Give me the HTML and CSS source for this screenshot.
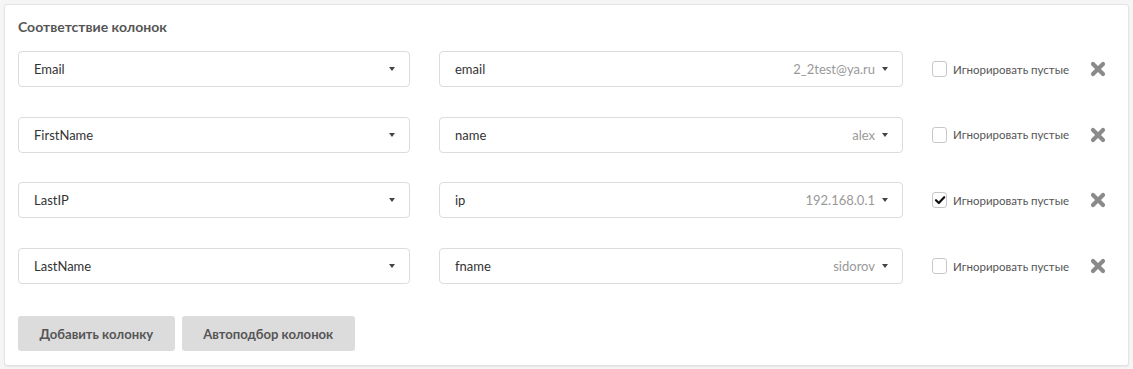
FILE: index.html
```html
<!DOCTYPE html>
<html lang="ru">
  <head>
    <meta charset="UTF-8" />
    <meta name="viewport" content="width=device-width, initial-scale=1.0" />
    <title>Соответствие колонок</title>
    <link rel="stylesheet" href="styles.css">
  </head>
  <body>
    <section class="mapping">
      <h3 class="mapping__title">Соответствие колонок</h3>
      <div class="mapping__rows">
        <div class="mapping__row">
          <div class="select select--field">
            <span class="select__text">Email</span>
            <span class="select__caret"></span>
          </div>
          <div class="select select--column">
            <span class="select__text">email</span>
            <span class="select__sample">2_2test@ya.ru</span>
            <span class="select__caret"></span>
          </div>
          <label class="check">
            <span class="check__box"></span>
            <span class="check__label">Игнорировать пустые</span>
          </label>
          <button class="remove" type="button" aria-label="Удалить">
            <svg viewBox="0 0 16 16" width="16" height="16"><path d="M3 3L13 13M13 3L3 13" /></svg>
          </button>
        </div>
        <div class="mapping__row">
          <div class="select select--field">
            <span class="select__text">FirstName</span>
            <span class="select__caret"></span>
          </div>
          <div class="select select--column">
            <span class="select__text">name</span>
            <span class="select__sample">alex</span>
            <span class="select__caret"></span>
          </div>
          <label class="check">
            <span class="check__box"></span>
            <span class="check__label">Игнорировать пустые</span>
          </label>
          <button class="remove" type="button" aria-label="Удалить">
            <svg viewBox="0 0 16 16" width="16" height="16"><path d="M3 3L13 13M13 3L3 13" /></svg>
          </button>
        </div>
        <div class="mapping__row">
          <div class="select select--field">
            <span class="select__text">LastIP</span>
            <span class="select__caret"></span>
          </div>
          <div class="select select--column">
            <span class="select__text">ip</span>
            <span class="select__sample">192.168.0.1</span>
            <span class="select__caret"></span>
          </div>
          <label class="check">
            <span class="check__box check__box--on">
              <svg viewBox="0 0 12 12" width="12" height="12"><path d="M2 6.2L4.8 9L10.2 3.2" /></svg>
            </span>
            <span class="check__label">Игнорировать пустые</span>
          </label>
          <button class="remove" type="button" aria-label="Удалить">
            <svg viewBox="0 0 16 16" width="16" height="16"><path d="M3 3L13 13M13 3L3 13" /></svg>
          </button>
        </div>
        <div class="mapping__row">
          <div class="select select--field">
            <span class="select__text">LastName</span>
            <span class="select__caret"></span>
          </div>
          <div class="select select--column">
            <span class="select__text">fname</span>
            <span class="select__sample">sidorov</span>
            <span class="select__caret"></span>
          </div>
          <label class="check">
            <span class="check__box"></span>
            <span class="check__label">Игнорировать пустые</span>
          </label>
          <button class="remove" type="button" aria-label="Удалить">
            <svg viewBox="0 0 16 16" width="16" height="16"><path d="M3 3L13 13M13 3L3 13" /></svg>
          </button>
        </div>
      </div>
      <div class="mapping__actions">
        <button class="btn" type="button">Добавить колонку</button>
        <button class="btn" type="button">Автоподбор колонок</button>
      </div>
    </section>
  </body>
</html>
```

FILE: styles.css
```css
*,
*::before,
*::after {
  padding: 0;
  margin: 0;
  box-sizing: border-box;
  font-family: "Lato", "Open Sans", sans-serif;
}

body {
  background-color: #f5f5f5;
  padding: 4px;
}

.mapping {
  background-color: #fff;
  border: 1px solid #e3e3e3;
  border-radius: 3px;
  box-shadow: 0 1px 1px rgba(0, 0, 0, 0.06);
  padding: 12px 13px 14px 13px;
  width: 1125px;
}

.mapping__title {
  color: #555;
  font-size: 14px;
  font-weight: 700;
  line-height: 20px;
  margin-bottom: 14px;
}

.mapping__rows {
  display: flex;
  flex-direction: column;
  row-gap: 29.7px;
}

.mapping__row {
  display: flex;
  align-items: center;
  height: 36px;
}

.select {
  display: flex;
  align-items: center;
  height: 36px;
  border: 1px solid #dcdcdc;
  border-radius: 4px;
  padding: 0 14px 0 15px;
  font-size: 13px;
  color: #333;
}

.select--field {
  width: 392px;
}

.select--column {
  width: 464px;
  margin-left: 29px;
}

.select__text {
  flex: 1;
}

.select__sample {
  color: #999;
  margin-right: 7px;
}

.select__caret {
  width: 0;
  height: 0;
  border-left: 3.5px solid transparent;
  border-right: 3.5px solid transparent;
  border-top: 4px solid #444;
}

.check {
  display: flex;
  align-items: center;
  column-gap: 6px;
  margin-left: 29px;
  width: 137px;
  cursor: pointer;
}

.check__box {
  display: flex;
  justify-content: center;
  align-items: center;
  width: 16px;
  height: 16px;
  border: 1px solid #c8c8c8;
  border-radius: 3px;
  background-color: #fff;
}

.check__box svg path {
  fill: none;
  stroke: #111;
  stroke-width: 2.2;
  stroke-linecap: round;
  stroke-linejoin: round;
}

.check__label {
  color: #555;
  font-size: 11.5px;
  white-space: nowrap;
}

.remove {
  display: flex;
  margin-left: 21px;
  border: none;
  background: none;
  cursor: pointer;
}

.remove svg path {
  fill: none;
  stroke: #8a8a8a;
  stroke-width: 4.2;
  stroke-linecap: round;
}

.mapping__actions {
  display: flex;
  column-gap: 7px;
  margin-top: 32px;
}

.btn {
  height: 35px;
  padding: 0 21.5px;
  border: none;
  border-radius: 3px;
  background-color: #dcdcdc;
  color: #555;
  font-size: 13.1px;
  font-weight: 700;
  cursor: pointer;
}
```
